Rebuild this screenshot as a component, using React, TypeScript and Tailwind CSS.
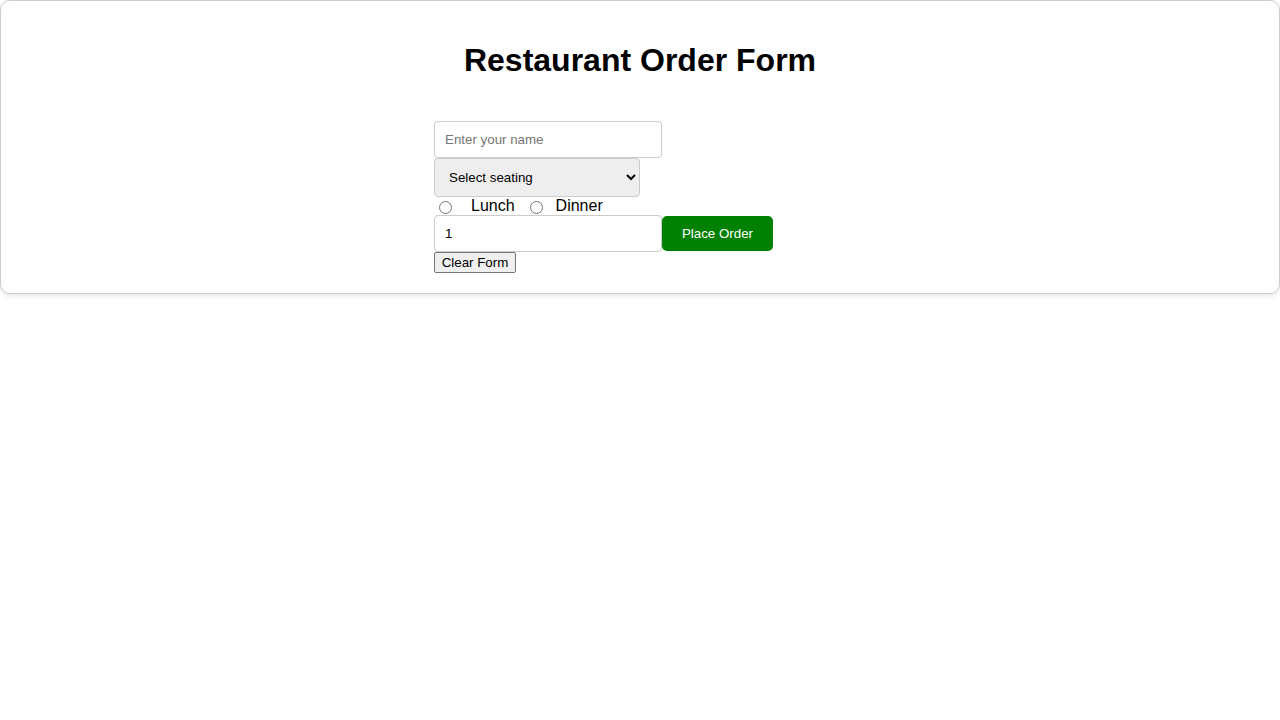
import React from "react";

export default function App() {
  return (
    <div className="min-h-screen bg-white font-['Liberation_Sans',Arial,sans-serif] text-black">
      <div className="rounded-[10px] border border-[#ccc] bg-white p-5 shadow-[0_2px_5px_rgba(0,0,0,0.1)]">
        <h1 className="my-[21px] text-center text-[32px] font-bold leading-[37px]">
          Restaurant Order Form
        </h1>
        <form
          className="mx-auto mt-[42px] flex w-[412px] flex-wrap content-start items-center"
          onSubmit={(e) => e.preventDefault()}
        >
          <input
            type="text"
            placeholder="Enter your name"
            className="h-[37px] w-[228px] rounded border border-[#ccc] px-[10px] text-[13.33px] placeholder:text-[#757575]"
          />
          <select className="h-[39px] w-[206px] rounded border border-[#ccc] bg-[#eee] pl-[10px] pr-[8px] text-[13.33px]">
            <option>Select seating</option>
            <option>Indoor</option>
            <option>Outdoor</option>
          </select>
          <div className="flex h-[18px] w-full items-end text-[16px] leading-[18px]">
            <input type="radio" name="meal" className="mb-[1px] ml-[5px] h-[13px] w-[13px]" />
            <span className="ml-[19px]">Lunch</span>
            <input type="radio" name="meal" className="mb-[1px] ml-[15px] h-[13px] w-[13px]" />
            <span className="ml-[13px]">Dinner</span>
          </div>
          <input
            type="number"
            defaultValue={1}
            className="h-[37px] w-[228px] rounded border border-[#ccc] px-[10px] text-[13.33px]"
          />
          <button
            type="submit"
            className="h-[35px] w-[111px] rounded-[5px] bg-[#008000] text-[13.33px] text-white"
          >
            Place Order
          </button>
          <button
            type="reset"
            className="h-[21px] w-[82px] rounded-[2px] border border-[#767676] bg-[#efefef] text-[13.33px] leading-[15px]"
          >
            Clear Form
          </button>
        </form>
      </div>
    </div>
  );
}
